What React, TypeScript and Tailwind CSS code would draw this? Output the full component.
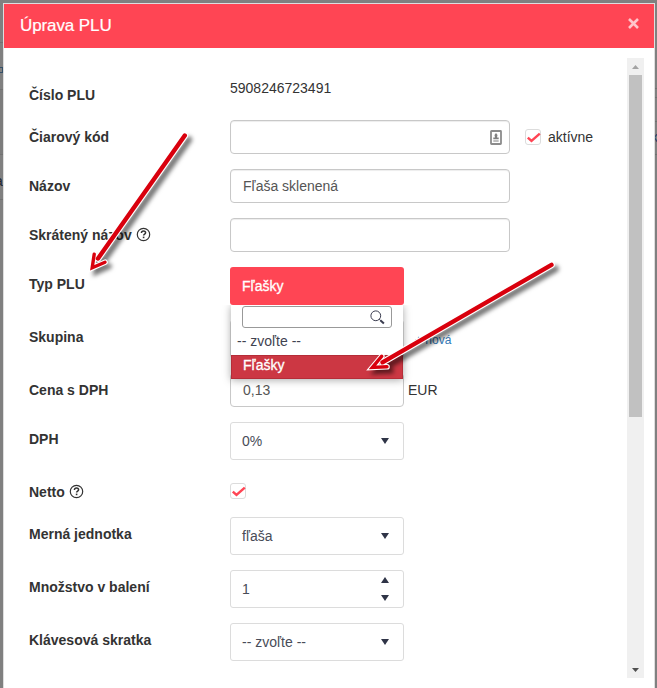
import type { ReactNode } from "react";

function HelpIcon() {
  return (
    <svg width="15" height="15" viewBox="0 0 15 15" fill="none" className="ml-1 inline-block align-[-2px]">
      <circle cx="7.5" cy="7.5" r="6.2" stroke="#333" strokeWidth="1.2" />
      <path
        d="M5.4 6c.1-1.4 1-2 2.1-2s2.1.7 2.1 1.8c0 1.3-2 1.3-2 2.8"
        stroke="#333"
        strokeWidth="1.5"
      />
      <path d="M6.8 9.6h1.6v1.6H6.8z" fill="#333" />
    </svg>
  );
}

function Row({
  label,
  help = false,
  className = "min-h-[34px]",
  children,
}: {
  label: string;
  help?: boolean;
  className?: string;
  children?: ReactNode;
}) {
  return (
    <div className={`mb-[15px] flex ${className}`}>
      <label className="w-[201px] shrink-0 pt-[7px] font-bold">
        {label}
        {help && <HelpIcon />}
      </label>
      {children}
    </div>
  );
}

function TextField({ value = "", className = "w-[280px]", children }: { value?: string; className?: string; children?: ReactNode }) {
  return (
    <div
      className={`flex h-[34px] items-center justify-between rounded border border-[#c8c8c8] bg-white px-3 text-[#555] shadow-[inset_0_1px_1px_rgba(0,0,0,0.075)] ${className}`}
    >
      <span>{value}</span>
      {children}
    </div>
  );
}

function Triangle({ up = false }: { up?: boolean }) {
  return (
    <svg width="8" height="6" viewBox="0 0 8 6" fill="#2f3447">
      <path d={up ? "M4 0 8 6H0z" : "M0 0h8L4 6z"} />
    </svg>
  );
}

function Select({ value, spinner = false }: { value: string; spinner?: boolean }) {
  return (
    <div className="flex h-[38px] w-[174px] items-center justify-between rounded-[3px] border border-[#dcdcdc] bg-white pl-[11px] pr-[14px] text-[#484c58]">
      <span>{value}</span>
      {spinner ? (
        <span className="flex flex-col gap-3">
          <Triangle up />
          <Triangle />
        </span>
      ) : (
        <Triangle />
      )}
    </div>
  );
}

function Checkbox() {
  return (
    <span className="flex size-4 items-center justify-center rounded-[3px] border border-[#dcdcdc] bg-white">
      <svg width="16" height="16" viewBox="0 0 16 16" fill="none" className="shrink-0">
        <path d="m2.8 8.6 3.7 3.4 8.3-7.4" stroke="#ff4554" strokeWidth="2.4" />
      </svg>
    </span>
  );
}

function TypeSelect() {
  return (
    <div className="relative h-[38px] w-[174px]">
      <div className="flex h-[38px] items-center rounded-[3px] bg-[#ff4554] pl-3 text-white [-webkit-text-stroke:0.3px_white]">
        Fľašky
      </div>
      <div className="absolute left-px top-[38px] z-10 h-[74px] w-[172px] bg-white shadow-[0_1px_8px_rgba(0,0,0,0.35)] [clip-path:inset(0_-12px_-12px_-12px)]">
        <div className="ml-[11px] mt-px flex h-[22px] w-[150px] items-center justify-end rounded-[3px] border border-[#999] pr-[6px]">
          <svg width="15" height="15" viewBox="0 0 15 15" fill="none" stroke="#3b3d50">
            <circle cx="5.8" cy="5.8" r="4.9" strokeWidth="1" />
            <path d="m9.2 9.2 1.4 1.4" />
            <path d="m10.3 10.3 3.6 3.3" strokeWidth="2" />
          </svg>
        </div>
        <div className="flex h-[27px] items-center pb-[2px] pl-[6px] text-[#3f4350]">-- zvoľte --</div>
        <div className="flex h-6 items-center border border-[#b52d38] bg-[#cc3743] pb-1 pl-[11px] text-white [-webkit-text-stroke:0.3px_white]">
          Fľašky
        </div>
      </div>
    </div>
  );
}

function Scrollbar() {
  return (
    <div className="flex h-[620px] w-[17px] flex-col items-center bg-[#f0f0f0]">
      <div className="flex h-[17px] items-center pt-px">
        <svg width="7" height="4" fill="#a3a3a3">
          <path d="M3.5 0 7 4H0z" />
        </svg>
      </div>
      <div className="h-[342px] w-[13px] bg-[#c1c1c1]" />
      <div className="mt-auto flex h-[17px] items-center">
        <svg width="7" height="4" fill="#505050">
          <path d="M0 0h7L3.5 4z" />
        </svg>
      </div>
    </div>
  );
}

const ARROWS = [
  { shaft: "M184.8 135.6 98 258.5", head: "M94.2 254.2 92.2 267.8 105 262.2" },
  { shaft: "M551.5 264.8 382.5 362.3", head: "M381.8 356.2 372.4 367.4 387 366.8" },
];

function Arrows() {
  return (
    <svg
      width="657"
      height="688"
      viewBox="0 0 657 688"
      fill="none"
      strokeLinecap="round"
      className="pointer-events-none absolute left-0 top-0 z-20 drop-shadow-[4px_4px_2px_rgba(0,0,0,0.55)]"
    >
      {ARROWS.map(({ shaft, head }) => (
        <g key={shaft}>
          <path d={shaft} stroke="#fff" strokeWidth="6.6" />
          <path d={head} stroke="#fff" strokeWidth="5.6" />
          <path d={shaft} stroke="#d9000d" strokeWidth="4.4" />
          <path d={head} stroke="#d9000d" strokeWidth="3.4" />
        </g>
      ))}
    </svg>
  );
}

// Sliver of the dimmed page that stays visible beside the dialog
function Backdrop() {
  return (
    <>
      <div className="absolute left-0 top-0 h-full w-[3px] overflow-hidden text-[14px] leading-5">
        <div className="mt-[42px] border-t border-[#727272]" />
        <div className="mt-[24px] h-[6px] w-[3px] border-y border-r border-[#355069]" />
        <div className="mt-[16px] h-[66px] border-y border-[#727272] bg-[#7c7c7c]" />
        <div className="ml-[-5px] mt-[16px] text-[#1d2530]">a</div>
        <div className="mt-[8px] border-t border-[#727272]" />
      </div>
      <div className="absolute right-0 top-0 h-full w-[2px] overflow-hidden text-[14px] leading-5">
        <div className="mt-[88px] h-[10px] border-y border-[#707070]" />
        <div className="mt-[23px] border-t border-[#707070]" />
        <div className="ml-[-4px] mt-[5px] text-[#263b64]">k</div>
        <div className="mt-[7px] border-t border-[#707070]" />
      </div>
    </>
  );
}

export default function App() {
  return (
    <div className="relative h-[688px] w-[657px] overflow-hidden bg-[#808080] pl-[3px] pt-[3px] font-['Liberation_Sans',Arial,sans-serif] text-[14px] leading-5 text-[#333]">
      <Backdrop />
      <div className="h-[685px] w-[652px] border-x border-t border-[#dedede] bg-white">
        <div className="flex h-11 items-center justify-between bg-[#ff4554] pl-4 pr-[15px] text-white">
          <h4 className="text-[17px] tracking-[-0.1px] [-webkit-text-stroke:0.2px_white]">Úprava PLU</h4>
          <svg width="11" height="11" viewBox="0 0 11 11" fill="none" className="mb-[6px]">
            <path d="m1 1 9 9m0-9-9 9" stroke="#ffc5ca" strokeWidth="2.6" />
          </svg>
        </div>
        <div className="flex justify-between pr-[10px] pt-[10px]">
          <form className="pl-[25px] pt-5">
            <Row label="Číslo PLU" className="h-[27px]">
              <span>5908246723491</span>
            </Row>
            <Row label="Čiarový kód">
              <TextField className="w-[280px] pr-[7px]">
                <svg width="12" height="15" viewBox="0 0 12 15" fill="none">
                  <rect x="1" y="1" width="10" height="13" rx="0.5" stroke="#8c8c8c" strokeWidth="1.8" />
                  <path d="M6 3 7.5 5 7 7.5H5L4.5 5zM3.3 7.5h5.4v1.7H3.3zM3.3 10.4h5.4v1.2H3.3z" fill="#808080" />
                </svg>
              </TextField>
              <div className="ml-[15px] flex items-center gap-[7px]">
                <Checkbox />
                <span>aktívne</span>
              </div>
            </Row>
            <Row label="Názov">
              <TextField value="Fľaša sklenená" />
            </Row>
            <Row label="Skrátený názov" help>
              <TextField />
            </Row>
            <Row label="Typ PLU">
              <TypeSelect />
            </Row>
            <Row label="Skupina" className="h-[38px]">
              <Select value="" />
              <a className="ml-[11px] mt-[10px] text-[12px] text-[#337ab7]">+ nová</a>
            </Row>
            <Row label="Cena s DPH">
              <TextField value="0,13" className="w-[174px]" />
              <span className="ml-1 mt-[7px]">EUR</span>
            </Row>
            <Row label="DPH">
              <Select value="0%" />
            </Row>
            <Row label="Netto" help className="h-[27px]">
              <div className="pt-2">
                <Checkbox />
              </div>
            </Row>
            <Row label="Merná jednotka">
              <Select value="fľaša" />
            </Row>
            <Row label="Množstvo v balení">
              <Select value="1" spinner />
            </Row>
            <Row label="Klávesová skratka">
              <Select value="-- zvoľte --" />
            </Row>
          </form>
          <Scrollbar />
        </div>
      </div>
      <Arrows />
    </div>
  );
}
